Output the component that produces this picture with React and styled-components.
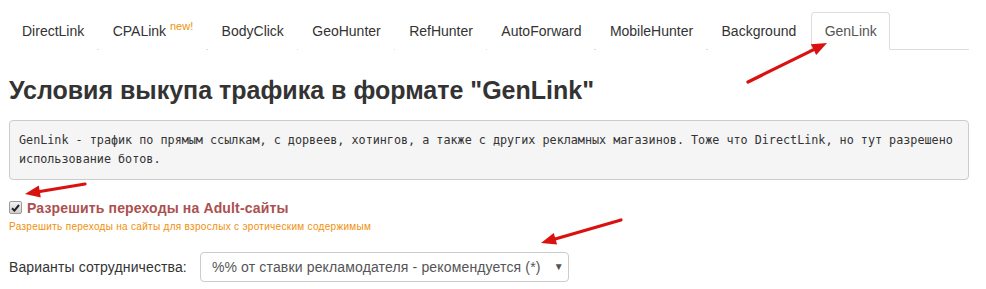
import React from "react";
import styled, { createGlobalStyle } from "styled-components";

const tabs = [
  { name: "DirectLink" },
  { name: "CPALink", badge: "new!" },
  { name: "BodyClick" },
  { name: "GeoHunter" },
  { name: "RefHunter" },
  { name: "AutoForward" },
  { name: "MobileHunter" },
  { name: "Background" },
  { name: "GenLink", active: true },
];

function Arrow({ x1, y1, x2, y2 }) {
  // shaft from tail to just before the tip, filled triangle at the tip
  const dx = x2 - x1;
  const dy = y2 - y1;
  const len = Math.sqrt(dx * dx + dy * dy);
  const ux = dx / len;
  const uy = dy / len;
  const head = 15;
  const half = 6;
  const bx = x2 - ux * head;
  const by = y2 - uy * head;
  const p1 = `${bx - uy * half},${by + ux * half}`;
  const p2 = `${bx + uy * half},${by - ux * half}`;
  return (
    <g>
      <line x1={x1} y1={y1} x2={bx + ux * 3} y2={by + uy * 3} stroke="#d9120f" strokeWidth="3.2" strokeLinecap="round" />
      <polygon points={`${x2},${y2} ${p1} ${p2}`} fill="#d9120f" />
    </g>
  );
}

function App() {
  return (
    <>
      <GlobalStyle />
      <Page>
        <TabList>
          {tabs.map((t) => (
            <Tab key={t.name} $active={t.active}>
              {t.name}
              {t.badge && <> <Badge>{t.badge}</Badge></>}
            </Tab>
          ))}
        </TabList>

        <Title>Условия выкупа трафика в формате "GenLink"</Title>

        <Description>
          GenLink - трафик по прямым ссылкам, с дорвеев, хотингов, а также с других рекламных магазинов. Тоже что DirectLink, но тут разрешено использование ботов.
        </Description>

        <CheckRow>
          <CheckBox>
            <svg width="9" height="8" viewBox="0 0 9 8">
              <path d="M1 4.2 L3.4 6.6 L8 1" fill="none" stroke="#222" strokeWidth="2" />
            </svg>
          </CheckBox>
          <CheckLabel>Разрешить переходы на Adult-сайты</CheckLabel>
        </CheckRow>
        <Hint>Разрешить переходы на сайты для взрослых с эротическим содержимым</Hint>

        <SelectRow>
          <FieldLabel>Варианты сотрудничества:</FieldLabel>
          <Select>
            <span>%% от ставки рекламодателя - рекомендуется (*)</span>
            <Caret>▼</Caret>
          </Select>
        </SelectRow>

        <Overlay width="986" height="289" viewBox="0 0 986 289">
          <Arrow x1={748} y1={82} x2={827} y2={43} />
          <Arrow x1={85} y1={184} x2={25} y2={194} />
          <Arrow x1={621} y1={220} x2={541} y2={243} />
        </Overlay>
      </Page>
    </>
  );
}

const GlobalStyle = createGlobalStyle`
  body {
    margin: 0;
    background: #fff;
    font-family: "Liberation Sans", Arial, sans-serif;
    font-size: 14px;
    line-height: 20px;
    color: #333;
  }
`;

const Page = styled.div`
  position: relative;
  width: 960px;
  height: 289px;
  padding: 12px 17px 0 9px;
  overflow: hidden;
`;

const TabList = styled.div`
  display: flex;
  border-bottom: 1px solid #ddd;
`;

const Tab = styled.div`
  padding: 8px 12px 8px 13px;
  margin-right: 2.4px;
  margin-bottom: -1px;
  margin-left: -1px;
  border: 1px solid ${(p) => (p.$active ? "#ddd" : "transparent")};
  border-bottom-color: ${(p) => (p.$active ? "#fff" : "transparent")};
  border-radius: 4px 4px 0 0;
  background: #fff;
  color: ${(p) => (p.$active ? "#555" : "#333")};
  white-space: nowrap;
`;

const Badge = styled.sup`
  font-size: 11px;
  line-height: 0;
  vertical-align: 6px;
  color: #f0920c;
`;

const Title = styled.h1`
  margin: 27px 0 17px;
  font-size: 25px;
  line-height: 26px;
  font-weight: bold;
  color: #333;
`;

const Description = styled.pre`
  margin: 0;
  padding: 10px 9px;
  background: #f5f5f5;
  border: 1px solid #ccc;
  border-radius: 4px;
  font-family: "DejaVu Sans Mono", "Liberation Mono", monospace;
  font-size: 11.75px;
  line-height: 19px;
  color: #333;
  white-space: pre-wrap;
`;

const CheckRow = styled.div`
  display: flex;
  align-items: center;
  gap: 5px;
  margin-top: 18px;
  height: 19px;
`;

const CheckBox = styled.span`
  display: flex;
  align-items: center;
  justify-content: center;
  width: 11px;
  height: 11px;
  border: 1px solid #9a9a9a;
  border-radius: 2px;
  background: linear-gradient(#f2f2f2, #cfcfcf);
`;

const CheckLabel = styled.span`
  font-weight: bold;
  font-size: 14px;
  letter-spacing: 0.15px;
  color: #ab5050;
`;

const Hint = styled.div`
  margin-top: 3px;
  font-size: 10px;
  line-height: 14px;
  letter-spacing: 0.3px;
  color: #f0900a;
`;

const SelectRow = styled.div`
  display: flex;
  align-items: center;
  gap: 13px;
  margin-top: 18px;
`;

const FieldLabel = styled.span`
  font-size: 14px;
  letter-spacing: 0.12px;
  color: #333;
`;

const Select = styled.div`
  display: flex;
  align-items: center;
  justify-content: space-between;
  box-sizing: border-box;
  width: 369px;
  height: 30px;
  padding: 0 4px 0 11px;
  border: 1px solid #ccc;
  border-radius: 4px;
  color: #555;
  font-size: 14px;
  letter-spacing: 0.15px;
`;

const Caret = styled.span`
  font-size: 10px;
  color: #555;
`;

const Overlay = styled.svg`
  position: absolute;
  left: 0;
  top: 0;
  pointer-events: none;
`;

export default App;
